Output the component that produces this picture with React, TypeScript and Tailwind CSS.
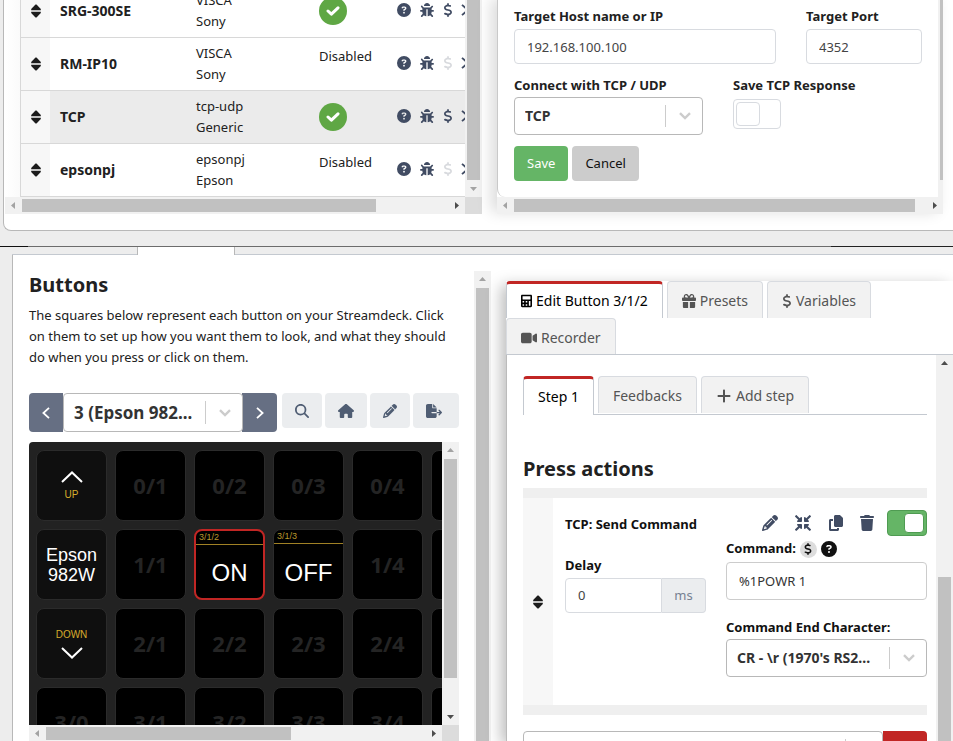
import type { ReactNode } from 'react'
import {
  FaCircleQuestion,
  FaCopy,
  FaDollarSign,
  FaFileExport,
  FaGift,
  FaHouse,
  FaMagnifyingGlass,
  FaPencil,
  FaPlus,
  FaTrash,
  FaVideo,
} from 'react-icons/fa6'
import { FaBug, FaCalculator, FaCompressArrowsAlt } from 'react-icons/fa'

type Dir = 'up' | 'down' | 'left' | 'right'

const arrowPoints: Record<Dir, string> = {
  up: '5,10 12,10 8.5,6',
  down: '5,7 12,7 8.5,11',
  left: '10,5 10,12 6,8.5',
  right: '7,5 7,12 11,8.5',
}

function ScrollArrow({ dir, dim }: { dir: Dir; dim?: boolean }) {
  return (
    <svg className="size-[17px] shrink-0" viewBox="0 0 17 17" aria-hidden="true">
      <polygon points={arrowPoints[dir]} fill={dim ? '#a3a3a3' : '#4d4d4d'} />
    </svg>
  )
}

function SortHandle() {
  return (
    <svg className="mx-auto block h-[14px] w-[10px]" viewBox="0 0 10 14" fill="#1c1c1c" aria-hidden="true">
      <path d="M4.5.5h1L9.8 5v1.2H.2V5Z" />
      <path d="M.2 7.8h9.6V9l-4.3 4.5h-1L.2 9Z" />
    </svg>
  )
}

function ThinChevron({ dir }: { dir: 'left' | 'right' }) {
  return (
    <svg className="h-3 w-2" viewBox="0 0 8 12" fill="none" stroke="currentColor" strokeWidth="1.8" aria-hidden="true">
      <path d={dir === 'left' ? 'M7 .8 1.4 6 7 11.2' : 'M1 .8 6.6 6 1 11.2'} />
    </svg>
  )
}

function SelectBox({
  id,
  label,
  value,
  className = '',
  textClass = 'text-sm',
}: {
  id: string
  label?: string
  value: string
  className?: string
  textClass?: string
}) {
  return (
    <div className={`relative ${className}`}>
      <select
        id={id}
        aria-label={label}
        className={`h-full w-full appearance-none rounded border border-[#b8b8b8] bg-white pl-[10px] pr-10 font-bold text-[#333] ${textClass}`}
      >
        <option>{value}</option>
      </select>
      <span className="pointer-events-none absolute inset-y-2 right-0 flex w-[38px] items-center justify-center border-l border-[#ccc]">
        <svg className="h-2 w-3" viewBox="0 0 12 8" fill="none" stroke="#ccc" strokeWidth="2.4" aria-hidden="true">
          <path d="m1 1.2 5 4.8 5-4.8" />
        </svg>
      </span>
    </div>
  )
}

const connections = [
  { name: 'SRG-300SE', type: 'VISCA', maker: 'Sony', on: true, active: false },
  { name: 'RM-IP10', type: 'VISCA', maker: 'Sony', on: false, active: false },
  { name: 'TCP', type: 'tcp-udp', maker: 'Generic', on: true, active: true },
  { name: 'epsonpj', type: 'epsonpj', maker: 'Epson', on: false, active: false },
]

function ConnectionsPanel() {
  return (
    <section className="flex h-[214px] w-[477px] shrink-0 flex-col">
      <div className="flex min-h-0 flex-1">
        <div className="flex flex-1 items-end overflow-hidden bg-gradient-to-r from-white to-[#fafafa] to-[15px] pl-[15px]">
          <table className="w-[520px] shrink-0 table-fixed border-separate border-spacing-0 bg-white">
            <colgroup>
              <col className="w-[30px]" />
              <col className="w-[136px]" />
              <col className="w-[123px]" />
              <col className="w-[78px]" />
              <col />
            </colgroup>
            <tbody>
              {connections.map((c) => (
                <tr key={c.name} className={c.active ? 'h-[53px] bg-[#ebebeb]' : 'h-[53px]'}>
                  <td className="border-b border-l border-[#d8d8d8] bg-[#f7f7f7]">
                    <SortHandle />
                  </td>
                  <td className="border-b border-[#d8d8d8] pl-[10px] text-sm font-bold">{c.name}</td>
                  <td className="border-b border-[#d8d8d8] pl-[10px] leading-[21px]">
                    {c.type}
                    <br />
                    {c.maker}
                  </td>
                  <td className="border-b border-[#d8d8d8] pl-[10px] align-top">
                    {c.on ? (
                      <span className="mt-3 flex size-7 items-center justify-center rounded-full bg-[#5fa744]">
                        <svg
                          className="h-[10px] w-[14px]"
                          viewBox="0 0 14 10"
                          fill="none"
                          stroke="#fff"
                          strokeWidth="3"
                          strokeLinecap="round"
                          strokeLinejoin="round"
                          aria-label="OK"
                        >
                          <path d="m2 5 3.4 3.2L12 1.8" />
                        </svg>
                      </span>
                    ) : (
                      <span className="block pt-2 leading-[21px]">Disabled</span>
                    )}
                  </td>
                  <td className="border-b border-[#d8d8d8] pl-[10px]">
                    <div className="flex items-center pb-[2px] text-[#414c63]">
                      <button aria-label="Help" className="w-[23px]">
                        <FaCircleQuestion className="size-[14px]" />
                      </button>
                      <button aria-label="Debug" className="w-[23px]">
                        <FaBug className="size-[14px]" />
                      </button>
                      <button aria-label="Variables" className={c.on ? 'w-[18px]' : 'w-[18px] text-[#d8dade]'}>
                        <FaDollarSign className="-ml-[2px] size-[14px]" />
                      </button>
                      <button aria-label="More">
                        <ThinChevron dir="right" />
                      </button>
                    </div>
                  </td>
                </tr>
              ))}
            </tbody>
          </table>
        </div>
        <div className="flex w-[17px] flex-col items-center bg-[#f1f1f1]">
          <div className="w-[13px] flex-1 bg-[#c1c1c1]" />
          <ScrollArrow dir="down" dim />
        </div>
      </div>
      <div className="flex h-[17px] items-center bg-[#f1f1f1]">
        <ScrollArrow dir="left" dim />
        <div className="h-[13px] w-[354px] bg-[#c1c1c1]" />
        <div className="flex-1" />
        <ScrollArrow dir="right" />
        <div className="size-[17px] bg-[#dcdcdc]" />
      </div>
    </section>
  )
}

function SettingsPanel() {
  const input = 'h-[35px] w-full rounded border border-[#d8dbe0] bg-white px-3 text-[#444]'
  return (
    <section className="mr-[10px] flex h-[214px] flex-1 flex-col shadow-[-6px_-2px_14px_rgba(0,0,0,0.14)]">
      <div className="flex min-h-0 flex-1 bg-white">
        <form className="flex flex-1 flex-col rounded-bl-lg border-l border-[#c9c9c9] bg-white pl-4 pr-4 pt-[6px]">
          <div className="grid grid-cols-12 gap-x-[30px]">
            <div className="col-span-8">
              <label htmlFor="host" className="block h-[23px] font-bold leading-5">
                Target Host name or IP
              </label>
              <input id="host" className={input} defaultValue="192.168.100.100" />
            </div>
            <div className="col-span-4">
              <label htmlFor="port" className="block h-[23px] font-bold leading-5">
                Target Port
              </label>
              <input id="port" className={input} defaultValue="4352" />
            </div>
          </div>
          <div className="mt-[11px] grid grid-cols-12 gap-x-[30px]">
            <div className="col-span-6">
              <label htmlFor="proto" className="block h-[22px] whitespace-nowrap font-bold leading-5">
                Connect with TCP / UDP
              </label>
              <SelectBox id="proto" value="TCP" className="h-[38px]" />
            </div>
            <div className="col-span-6">
              <label htmlFor="save-response" className="block h-6 whitespace-nowrap font-bold leading-5">
                Save TCP Response
              </label>
              <input
                id="save-response"
                type="checkbox"
                className="block h-[30px] w-12 appearance-none rounded border border-[#d8dbe0] bg-white p-[2px] before:block before:size-6 before:rounded-sm before:border before:border-[#d8dbe0] before:bg-white"
              />
            </div>
          </div>
          <div className="mt-[11px] flex gap-1">
            <button type="button" className="h-[35px] rounded bg-[#65b566] px-[13px] text-white">
              Save
            </button>
            <button type="button" className="h-[35px] rounded bg-[#ccc] px-[13px] text-[#111]">
              Cancel
            </button>
          </div>
        </form>
        <div className="flex w-[5px] flex-col bg-[#f1f1f1] pb-[17px] pl-[2px]">
          <div className="flex-1 bg-[#c1c1c1]" />
        </div>
      </div>
      <div className="flex h-[17px] items-center bg-[#f1f1f1]">
        <ScrollArrow dir="left" dim />
        <div className="h-[13px] flex-1 bg-[#c1c1c1]" />
        <div className="w-[11px]" />
        <ScrollArrow dir="right" />
      </div>
    </section>
  )
}

const deckRows = [0, 1, 2, 3]
const deckCols = [0, 1, 2, 3, 4]

function DeckKey({ row, col }: { row: number; col: number }) {
  const key = `${row}/${col}`
  const base = 'flex size-[71px] flex-col items-center overflow-hidden rounded-lg'
  if (key === '0/0' || key === '2/0') {
    const up = key === '0/0'
    return (
      <button className={`${base} justify-center gap-[6px] border border-[#2b2b2b] bg-[#0f0f0f] text-[10px] leading-[12px] text-[#d6ab2c]`}>
        {!up && 'DOWN'}
        <svg className="h-3 w-[22px] shrink-0" viewBox="0 0 22 12" fill="none" stroke="#fff" strokeWidth="2" aria-hidden="true">
          <path d={up ? 'm1 11 10-9.5L21 11' : 'm1 1 10 9.5L21 1'} />
        </svg>
        {up && 'UP'}
      </button>
    )
  }
  if (key === '1/0') {
    return (
      <button className={`${base} justify-center border border-[#2b2b2b] bg-[#0f0f0f] text-lg leading-5 text-white`}>
        Epson
        <br />
        982W
      </button>
    )
  }
  if (key === '1/2' || key === '1/3') {
    const on = key === '1/2'
    return (
      <button className={`${base} bg-black text-white ${on ? 'border-2 border-[#c12624]' : 'border border-[#2b2b2b]'}`}>
        <span className="block h-[14px] w-full shrink-0 border-b border-[#a08125] pl-[3px] text-left text-[9px] leading-3 text-[#b8962c]">
          3/{key}
        </span>
        <span className="flex flex-1 items-center pt-[2px] text-2xl leading-8">{on ? 'ON' : 'OFF'}</span>
      </button>
    )
  }
  return (
    <button className={`${base} justify-center border border-[#2b2b2b] bg-black font-['Noto_Sans',sans-serif] text-[22px] font-bold text-[#242424]`}>
      {key}
    </button>
  )
}

function ToolButton({ label, className, children }: { label: string; className: string; children: ReactNode }) {
  return (
    <button aria-label={label} className={`flex h-[35px] items-center justify-center rounded bg-[#ebedef] text-[#4f5d73] ${className}`}>
      {children}
    </button>
  )
}

function ButtonsPanel() {
  return (
    <section className="flex w-[430px] shrink-0 flex-col">
      <h2 className="mt-4 text-xl font-bold leading-7">Buttons</h2>
      <p className="mt-[6px] leading-[21px]">
        The squares below represent each button on your Streamdeck. Click on them to set up how you want them to look,
        and what they should do when you press or click on them.
      </p>
      <div className="mt-[25px] flex">
        <button aria-label="Previous page" className="flex h-[39px] w-[34px] items-center justify-center rounded-l bg-[#666f83] text-white">
          <ThinChevron dir="left" />
        </button>
        <SelectBox id="page" label="Page" value="3 (Epson 982..." className="-mr-px h-[39px] w-[180px]" textClass="text-[17px]" />
        <button aria-label="Next page" className="mr-[5px] flex h-[39px] w-[35px] items-center justify-center rounded-r bg-[#666f83] text-white">
          <ThinChevron dir="right" />
        </button>
        <div className="flex flex-1 gap-[3px]">
          <ToolButton label="Search" className="w-10">
            <FaMagnifyingGlass className="size-[14px]" />
          </ToolButton>
          <ToolButton label="Home" className="w-[42px]">
            <FaHouse className="size-4" />
          </ToolButton>
          <ToolButton label="Edit" className="w-10">
            <FaPencil className="size-[14px]" />
          </ToolButton>
          <ToolButton label="Export" className="flex-1 pr-1">
            <FaFileExport className="size-4" />
          </ToolButton>
        </div>
      </div>
      <div className="mt-[10px] flex h-[283px] shrink-0">
        <div className="flex flex-1 flex-col gap-2 overflow-hidden rounded-tl bg-[#222] pl-[7px] pt-2 font-['Liberation_Sans',Arial,sans-serif]">
          {deckRows.map((row) => (
            <div key={row} className="flex shrink-0 gap-2 *:shrink-0">
              {deckCols.map((col) => (
                <DeckKey key={col} row={row} col={col} />
              ))}
              <div className="size-[71px] rounded-lg border border-[#2b2b2b] bg-black" />
            </div>
          ))}
        </div>
        <div className="flex w-[17px] flex-col items-center bg-[#f1f1f1]">
          <ScrollArrow dir="up" dim />
          <div className="h-[219px] w-[13px] bg-[#c1c1c1]" />
          <div className="flex-1" />
          <ScrollArrow dir="down" />
        </div>
      </div>
      <div className="flex h-[17px] shrink-0 items-center bg-[#f1f1f1]">
        <ScrollArrow dir="left" dim />
        <div className="h-[13px] w-[245px] bg-[#c1c1c1]" />
        <div className="flex-1" />
        <ScrollArrow dir="right" />
        <div className="size-[17px] bg-[#dcdcdc]" />
      </div>
    </section>
  )
}

const tabIdle =
  'flex items-center gap-1 rounded-t border border-b-0 border-[#d8dbe0] bg-[#f2f2f2] px-[14px] pt-[2px] text-sm text-[#555] whitespace-nowrap'
const tabActive =
  'flex items-center gap-1 rounded-t border-x border-t-[3px] border-x-[#c4c9d0] border-t-[#c12624] bg-white px-[14px] text-sm text-black whitespace-nowrap'

function EditPanel() {
  return (
    <section className="mt-[26px] flex min-w-0 flex-1 flex-col shadow-[-5px_4px_14px_rgba(0,0,0,0.26)]">
      <nav className="flex shrink-0 flex-wrap gap-x-1 bg-white">
        <button className={`${tabActive} h-[37px]`}>
          <FaCalculator className="h-[14px] w-[11px]" />
          Edit Button 3/1/2
        </button>
        <button className={`${tabIdle} h-[37px]`}>
          <FaGift className="size-[14px]" />
          Presets
        </button>
        <button className={`${tabIdle} h-[37px]`}>
          <FaDollarSign className="-mx-[2px] size-[14px]" />
          Variables
        </button>
        <div className="flex w-full border-b border-[#c4c9d0]">
          <button className={`${tabIdle} h-[36px]`}>
            <FaVideo className="size-4" />
            Recorder
          </button>
        </div>
      </nav>
      <div className="flex min-h-0 flex-1 overflow-hidden border-l border-[#bbb] bg-white">
        <div className="flex min-w-0 flex-1 flex-col pl-4 pr-[9px] pt-[21px]">
          <nav className="flex h-[39px] shrink-0 gap-1 border-b border-[#c4c9d0]">
            <button className={`${tabActive} h-[39px]`}>Step 1</button>
            <button className={`${tabIdle} h-[37px]`}>Feedbacks</button>
            <button className={`${tabIdle} h-[37px]`}>
              <FaPlus className="size-4" />
              Add step
            </button>
          </nav>
          <h3 className="mt-10 text-xl font-bold leading-7">Press actions</h3>
          <div className="mt-[5px] flex shrink-0 border-y-[10px] border-[#efefef]">
            <div className="flex w-[30px] shrink-0 items-center bg-[#f7f7f7]">
              <SortHandle />
            </div>
            <div className="min-w-0 flex-1 pb-7 pl-3 pt-3 text-[#111]">
              <div className="flex h-[26px] items-center">
                <span className="flex-1 whitespace-nowrap pt-1 font-bold">TCP: Send Command</span>
                <div className="flex items-center gap-[17px] text-[#414c63]">
                  <button aria-label="Rename">
                    <FaPencil className="size-4" />
                  </button>
                  <button aria-label="Collapse">
                    <FaCompressArrowsAlt className="size-4" />
                  </button>
                  <button aria-label="Duplicate">
                    <FaCopy className="size-4" />
                  </button>
                  <button aria-label="Delete" className="-ml-[2px]">
                    <FaTrash className="size-4" />
                  </button>
                </div>
                <input
                  type="checkbox"
                  aria-label="Enabled"
                  defaultChecked
                  className="ml-3 flex h-[26px] w-10 appearance-none justify-end rounded border border-[#4f9b52] bg-[#65b566] p-[2px] before:block before:h-5 before:w-5 before:rounded-sm before:border before:border-[#4f9b52] before:bg-white"
                />
              </div>
              <div className="grid grid-cols-[141fr_201fr] gap-x-5">
                <div className="pt-[19px]">
                  <label htmlFor="delay" className="block h-[23px] font-bold leading-5">
                    Delay
                  </label>
                  <div className="flex h-[35px]">
                    <input id="delay" className="w-full min-w-0 flex-1 rounded-l border border-[#d8dbe0] px-3 text-[#444]" defaultValue="0" />
                    <span className="flex w-11 items-center justify-center rounded-r border border-l-0 border-[#d8dbe0] bg-[#ebedef] text-[#768192]">
                      ms
                    </span>
                  </div>
                </div>
                <div>
                  <div className="flex h-[26px] items-center gap-1">
                    <label htmlFor="command" className="font-bold">
                      Command:
                    </label>
                    <span className="flex size-[17px] items-center justify-center rounded-full bg-[#ddd]">
                      <FaDollarSign className="size-3" />
                    </span>
                    <FaCircleQuestion className="size-4 text-[#111]" />
                  </div>
                  <input id="command" className="h-[38px] w-full rounded border border-[#ccc] px-3 text-[#333]" defaultValue="%1POWR 1" />
                  <label htmlFor="end-char" className="mt-[17px] block h-[22px] whitespace-nowrap font-bold leading-5">
                    Command End Character:
                  </label>
                  <SelectBox id="end-char" value="CR - \r (1970's RS2..." className="h-[38px]" />
                </div>
              </div>
            </div>
          </div>
          <div className="mt-4 flex shrink-0">
            <SelectBox id="add-action" label="Add action" value="" className="h-[38px] flex-1" />
            <button aria-label="Browse actions" className="h-[38px] w-11 rounded-r bg-[#c12624]" />
          </div>
        </div>
        <div className="flex w-[17px] shrink-0 flex-col items-center bg-[#f1f1f1]">
          <ScrollArrow dir="up" />
          <div className="h-[205px]" />
          <div className="w-[13px] flex-1 bg-[#c1c1c1]" />
        </div>
      </div>
    </section>
  )
}

export default function App() {
  return (
    <div className="flex h-screen flex-col overflow-hidden bg-[#ededed] font-['Noto_Sans','Open_Sans',sans-serif] text-[13px] text-[#212121]">
      <div className="ml-[3px] shrink-0 overflow-hidden rounded-bl-lg border-b border-l border-[#b8b8b8] bg-white pb-4 pl-px">
        <div className="flex gap-[15px]">
          <ConnectionsPanel />
          <SettingsPanel />
        </div>
      </div>
      <div className="mt-[15px] flex h-px shrink-0">
        <div className="w-7 bg-[#111]" />
        <div className="flex-1 bg-[#6c6c6c]" />
        <div className="w-[122px] bg-[#222]" />
      </div>
      <div className="ml-3 flex h-2 shrink-0">
        <div className="w-[125px] border-b border-[#c4c9d0]" />
        <div className="w-[98px] border-x border-[#b8b8b8] bg-white" />
        <div className="flex-1 border-b border-[#c4c9d0]" />
      </div>
      <main className="ml-3 flex min-h-0 flex-1 overflow-hidden border-l border-[#b8b8b8] bg-white pl-4">
        <ButtonsPanel />
        <div className="ml-[15px] mr-[15px] mt-4 flex w-[17px] shrink-0 flex-col items-center bg-[#f1f1f1]">
          <ScrollArrow dir="up" dim />
          <div className="w-[13px] flex-1 bg-[#c1c1c1]" />
        </div>
        <EditPanel />
      </main>
    </div>
  )
}
